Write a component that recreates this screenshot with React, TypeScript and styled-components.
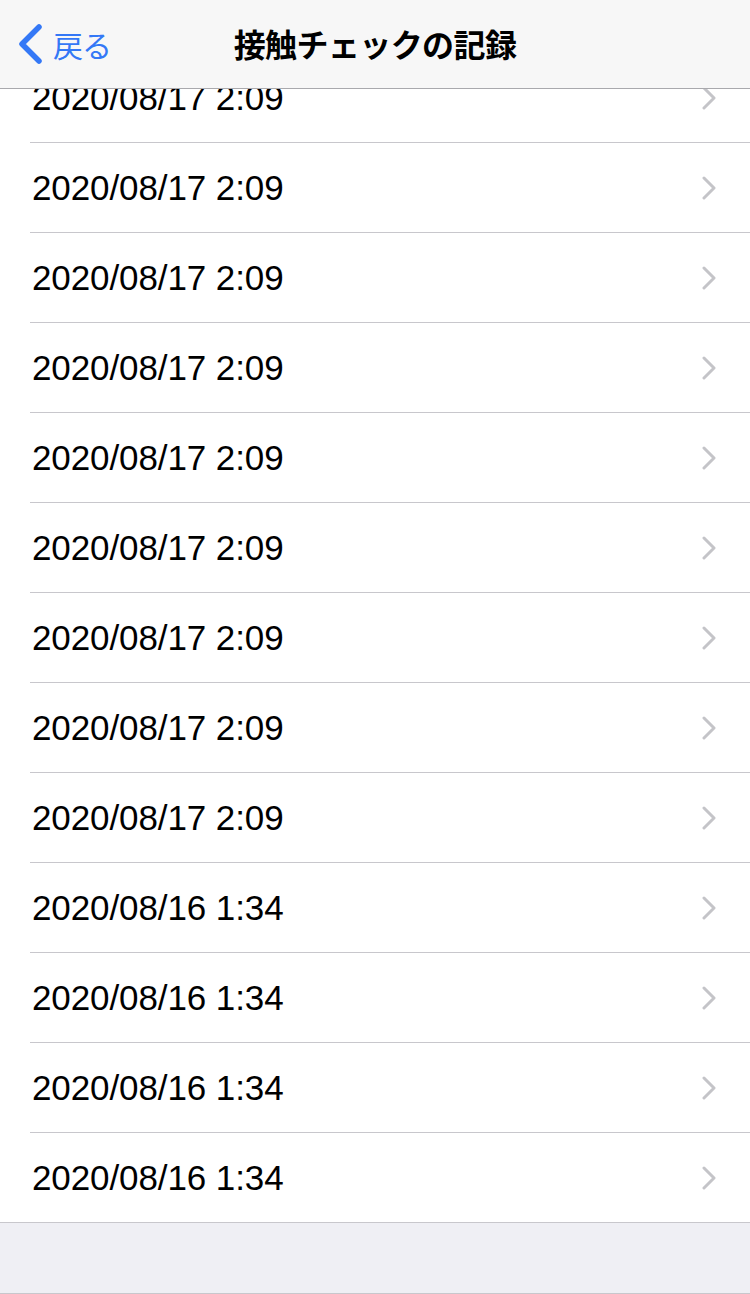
import React from "react";
import styled, { createGlobalStyle } from "styled-components";

const GlobalStyle = createGlobalStyle`
  html, body { margin: 0; padding: 0; background: #efeff4; }
  * { box-sizing: border-box; }
`;

const Screen = styled.div`
  width: 750px;
  height: 1294px;
  display: flex;
  flex-direction: column;
  overflow: hidden;
  background: #efeff4;
  border-bottom: 1px solid #c8c7cc;
`;

const NavBar = styled.header`
  flex: 0 0 89px;
  height: 89px;
  background: #f7f7f7;
  border-bottom: 1px solid #a9a9ad;
  display: grid;
  grid-template-columns: 1fr auto 1fr;
  align-items: center;
  font-family: "Noto Sans CJK JP", sans-serif;
`;

const BackButton = styled.button`
  justify-self: start;
  display: flex;
  align-items: center;
  gap: 10px;
  padding: 0 0 0 17px;
  border: 0;
  background: transparent;
  color: #3478f6;
  font-family: "Noto Sans CJK JP", sans-serif;
  font-size: 30px;
  line-height: 1;
  cursor: pointer;
`;

const BackLabel = styled.span`
  display: block;
  margin-top: -1px;
  letter-spacing: -1px;
`;

const Title = styled.h1`
  margin: 0;
  font-family: "Noto Sans CJK JP", sans-serif;
  font-size: 32px;
  font-weight: 700;
  letter-spacing: -0.6px;
  color: #000;
  margin-top: -2px;
`;

const Viewport = styled.main`
  flex: 1 1 auto;
  overflow: hidden;
`;

const List = styled.ul`
  list-style: none;
  margin: -36px 0 0;
  padding: 0;
  background: #fff;
`;

const Row = styled.li<{ $last?: boolean }>`
  height: 90px;
  padding-left: 30px;
  background: #fff;
`;

const RowInner = styled.div<{ $last?: boolean }>`
  height: 90px;
  display: flex;
  align-items: center;
  justify-content: space-between;
  padding-left: 2px;
  padding-right: 34px;
  border-bottom: 1px solid #c8c7cc;
  margin-left: ${(p) => (p.$last ? "-30px" : "0")};
  padding-left: ${(p) => (p.$last ? "32px" : "2px")};
`;

const DateText = styled.span`
  font-family: "Liberation Sans", Arial, sans-serif;
  font-size: 35px;
  color: #000;
  letter-spacing: -0.1px;
`;

const Chevron = () => (
  <svg width="14" height="24" viewBox="0 0 14 24" fill="none">
    <path
      d="M2 2 L12 12 L2 22"
      stroke="#c4c4c8"
      strokeWidth="3"
      strokeLinecap="round"
      strokeLinejoin="round"
    />
  </svg>
);

const BackChevron = () => (
  <svg width="26" height="42" viewBox="0 0 26 42" fill="none">
    <path
      d="M22 4 L5 21 L22 38"
      stroke="#3478f6"
      strokeWidth="5.5"
      strokeLinecap="round"
      strokeLinejoin="round"
    />
  </svg>
);

const records = [
  ...Array(9).fill("2020/08/17 2:09"),
  ...Array(4).fill("2020/08/16 1:34"),
];

export default function App() {
  return (
    <>
      <GlobalStyle />
      <Screen>
        <NavBar>
          <BackButton>
            <BackChevron />
            <BackLabel>戻る</BackLabel>
          </BackButton>
          <Title>接触チェックの記録</Title>
          <div />
        </NavBar>
        <Viewport>
          <List>
            {records.map((r, i) => {
              const last = i === records.length - 1;
              return (
                <Row key={i}>
                  <RowInner $last={last}>
                    <DateText>{r}</DateText>
                    <Chevron />
                  </RowInner>
                </Row>
              );
            })}
          </List>
        </Viewport>
      </Screen>
    </>
  );
}
